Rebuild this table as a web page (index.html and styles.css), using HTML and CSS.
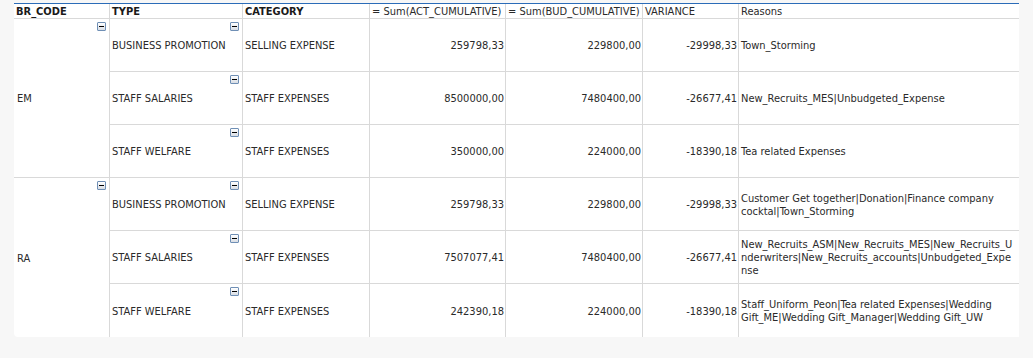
FILE: index.html
```html
<!DOCTYPE html>
<html>
<head>
<meta charset="utf-8">
<link rel="stylesheet" href="styles.css">
</head>
<body>
<div class="pivot">
  <div class="hd b">BR_CODE</div>
  <div class="hd b">TYPE</div>
  <div class="hd b">CATEGORY</div>
  <div class="hd">= Sum(ACT_CUMULATIVE)</div>
  <div class="hd">= Sum(BUD_CUMULATIVE)</div>
  <div class="hd">VARIANCE</div>
  <div class="hd last">Reasons</div>

  <div class="c br span3"><span class="tog"></span>EM</div>
  <div class="c"><span class="tog"></span>BUSINESS PROMOTION</div>
  <div class="c">SELLING EXPENSE</div>
  <div class="c num">259798,33</div>
  <div class="c num">229800,00</div>
  <div class="c num">-29998,33</div>
  <div class="c txt last">Town_Storming</div>

  <div class="c"><span class="tog"></span>STAFF SALARIES</div>
  <div class="c">STAFF EXPENSES</div>
  <div class="c num">8500000,00</div>
  <div class="c num">7480400,00</div>
  <div class="c num">-26677,41</div>
  <div class="c txt last">New_Recruits_MES|Unbudgeted_Expense</div>

  <div class="c"><span class="tog"></span>STAFF WELFARE</div>
  <div class="c">STAFF EXPENSES</div>
  <div class="c num">350000,00</div>
  <div class="c num">224000,00</div>
  <div class="c num">-18390,18</div>
  <div class="c txt last">Tea related Expenses</div>

  <div class="c br span3 bottom"><span class="tog"></span>RA</div>
  <div class="c"><span class="tog"></span>BUSINESS PROMOTION</div>
  <div class="c">SELLING EXPENSE</div>
  <div class="c num">259798,33</div>
  <div class="c num">229800,00</div>
  <div class="c num">-29998,33</div>
  <div class="c txt last">Customer Get together|Donation|Finance company cocktal|Town_Storming</div>

  <div class="c"><span class="tog"></span>STAFF SALARIES</div>
  <div class="c">STAFF EXPENSES</div>
  <div class="c num">7507077,41</div>
  <div class="c num">7480400,00</div>
  <div class="c num">-26677,41</div>
  <div class="c txt last">New_Recruits_ASM|New_Recruits_MES|New_Recruits_Underwriters|New_Recruits_accounts|Unbudgeted_Expense</div>

  <div class="c bottom"><span class="tog"></span>STAFF WELFARE</div>
  <div class="c bottom">STAFF EXPENSES</div>
  <div class="c num bottom">242390,18</div>
  <div class="c num bottom">224000,00</div>
  <div class="c num bottom">-18390,18</div>
  <div class="c txt last bottom">Staff_Uniform_Peon|Tea related Expenses|Wedding Gift_ME|Wedding Gift_Manager|Wedding Gift_UW</div>
</div>
</body>
</html>
```
FILE: styles.css
```css
html, body {
  margin: 0;
  padding: 0;
  background: #f7f7f7;
}

body {
  padding: 3px 0 0 14px;
  font-family: "DejaVu Sans Condensed", "DejaVu Sans", sans-serif;
  font-stretch: condensed;
  font-size: 11px;
  color: #2a2a2a;
}

.pivot {
  display: grid;
  grid-template-columns: 96px 133px 127px 136px 137px 96px 280px;
  grid-template-rows: 15px repeat(6, 53px);
  width: 1005px;
  background: #fff;
  border-top: 1px solid #2b6cb8;
  border-bottom-left-radius: 4px;
  overflow: hidden;
}

.hd {
  box-sizing: border-box;
  border-right: 1px solid #d9d9d9;
  border-bottom: 1px solid #d9d9d9;
  padding: 1px 2px 0;
  line-height: 13px;
  white-space: nowrap;
  overflow: hidden;
}

.hd.b {
  font-weight: bold;
  color: #1a1a1a;
}

.c {
  position: relative;
  box-sizing: border-box;
  border-right: 1px solid #d9d9d9;
  border-bottom: 1px solid #d9d9d9;
  display: flex;
  align-items: center;
  padding: 1px 2px 0;
  line-height: 13px;
}

.last {
  border-right: none;
}

.bottom {
  border-bottom: none;
}

.span3 {
  grid-row: span 3;
}

.br {
  padding-left: 3px;
}

.num {
  justify-content: flex-end;
  padding-right: 1px;
}

.txt {
  overflow-wrap: anywhere;
  padding-right: 4px;
}

.tog {
  position: absolute;
  top: 3px;
  right: 3px;
  width: 9px;
  height: 9px;
  box-sizing: border-box;
  border: 1px solid #6f8fb5;
  border-radius: 1px;
  background: linear-gradient(#ffffff, #d8dde4);
}

.tog::after {
  content: "";
  position: absolute;
  left: 1px;
  top: 3px;
  width: 5px;
  height: 1px;
  background: #000;
}
```
